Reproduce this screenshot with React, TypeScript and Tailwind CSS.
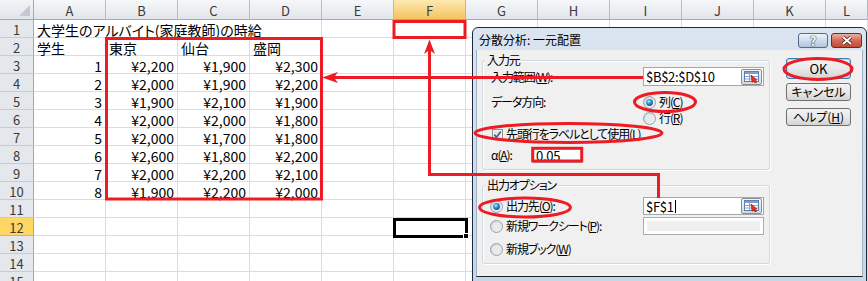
import React from "react";

const COLS = ["A", "B", "C", "D", "E", "F", "G", "H", "I", "J", "K", "L"];

const DATA: number[][] = [
  [1, 2200, 1900, 2300],
  [2, 2000, 1900, 2200],
  [3, 1900, 2100, 1900],
  [4, 2000, 2000, 1800],
  [5, 2000, 1700, 1800],
  [6, 2600, 1800, 2200],
  [7, 2000, 2200, 2100],
  [8, 1900, 2200, 2000],
];

const yen = (n: number) => "\u00A5" + n.toLocaleString("en-US");

const CELL =
  "border-r border-b border-[#dadcdf] text-[14px] leading-[14px] pt-[3px] px-[3px] whitespace-nowrap text-black";

function ColHeader({ label, sel }: { label: string; sel?: boolean }) {
  return (
    <div
      className={
        sel
          ? "flex items-center justify-center border-r border-b border-r-[#d9b36a] border-b-[#e49a37] bg-gradient-to-b from-[#fde9b0] to-[#f4c35c] text-[13px] leading-none pt-[1px] text-[#3a3a3a]"
          : "flex items-center justify-center border-r border-b border-r-[#b5bcc6] border-b-[#9eaab8] bg-gradient-to-b from-[#f6f8fa] to-[#e1e5ea] text-[13px] leading-none pt-[1px] text-[#3a3a3a]"
      }
    >
      {label}
    </div>
  );
}

function RowHeader({ n, sel }: { n: number; sel?: boolean }) {
  return (
    <div
      className={
        sel
          ? "flex items-center justify-center border-r border-b border-r-[#e49a37] border-b-[#d9b36a] bg-[#fdd663] text-[13px] leading-none pt-[2px] text-[#3a3a3a]"
          : "flex items-center justify-center border-r border-b border-r-[#9eaab8] border-b-[#c6ccd4] bg-[#e4e8ed] text-[13px] leading-none pt-[2px] text-[#3a3a3a]"
      }
    >
      {n}
    </div>
  );
}

function Sheet() {
  const cells: React.ReactNode[] = [];
  cells.push(
    <div
      key="corner"
      className="relative border-r border-b border-r-[#9eaab8] border-b-[#9eaab8] bg-gradient-to-b from-[#f2f4f7] to-[#e1e5ea]"
    >
      <svg className="absolute right-[3px] bottom-[3px]" width="11" height="11" viewBox="0 0 11 11">
        <polygon points="11,0 11,11 0,11" fill="#c3c9d1" />
      </svg>
    </div>
  );
  COLS.forEach((c) => cells.push(<ColHeader key={"h" + c} label={c} sel={c === "F"} />));

  for (let r = 1; r <= 15; r++) {
    cells.push(<RowHeader key={"r" + r} n={r} sel={r === 12} />);
    if (r === 1) {
      cells.push(
        <div key="a1" className={CELL + " col-span-4"}>
          大学生のアルバイト(家庭教師)の時給
        </div>
      );
      for (let c = 4; c < 12; c++) cells.push(<div key={"c1-" + c} className={CELL} />);
      continue;
    }
    for (let c = 0; c < 12; c++) {
      let content: React.ReactNode = null;
      let right = false;
      if (r === 2) {
        content = ["学生", "東京", "仙台", "盛岡"][c] ?? null;
      } else if (r >= 3 && r <= 10 && c < 4) {
        const v = DATA[r - 3][c];
        content = c === 0 ? String(v) : yen(v);
        right = true;
      }
      const active = r === 12 && c === 5;
      cells.push(
        <div
          key={"c" + r + "-" + c}
          className={CELL + (right ? " text-right" : "") + (active ? " relative" : "")}
        >
          {content}
          {active ? (
            <>
              <div className="absolute left-[-1px] top-0 w-[75px] h-[20px] border-[3px] border-black" />
              <div className="absolute left-[69px] top-[15px] w-[6px] h-[6px] bg-black border border-white" />
            </>
          ) : null}
        </div>
      );
    }
  }

  return (
    <div className="grid grid-cols-[34px_repeat(11,72px)_42px] grid-rows-[20px_repeat(15,18px)]">
      {cells}
    </div>
  );
}

function Radio({ checked }: { checked?: boolean }) {
  return (
    <svg width="13" height="13" viewBox="0 0 13 13" className="shrink-0">
      <defs>
        <linearGradient id="rgb" x1="0" y1="0" x2="1" y2="1">
          <stop offset="0" stopColor="#c9ccd1" />
          <stop offset="1" stopColor="#f7f7f7" />
        </linearGradient>
        <radialGradient id="rdot" cx="0.4" cy="0.35" r="0.75">
          <stop offset="0" stopColor="#b5ecff" />
          <stop offset="0.45" stopColor="#2b95dc" />
          <stop offset="1" stopColor="#0a3b73" />
        </radialGradient>
      </defs>
      <circle cx="6.5" cy="6.5" r="6" fill="url(#rgb)" stroke="#9aa0a7" />
      <circle cx="6.5" cy="6.5" r="4.2" fill="#e9eaec" />
      {checked ? <circle cx="6.5" cy="6.5" r="3.4" fill="url(#rdot)" /> : null}
    </svg>
  );
}

function Checkbox() {
  return (
    <svg width="11" height="11" viewBox="0 0 11 11" className="shrink-0">
      <rect x="0.5" y="0.5" width="10" height="10" fill="#f4f4f4" stroke="#8e8f8f" />
      <rect x="2" y="2" width="7" height="7" fill="#e3e5e8" />
      <path d="M2.3 5.6 L4.5 8.2 L8.8 2.4" fill="none" stroke="#4a5f8f" strokeWidth="1.7" />
    </svg>
  );
}

function RefIcon() {
  return (
    <svg width="16" height="12" viewBox="0 0 16 12">
      <rect x="0.5" y="0.5" width="14" height="10" fill="#ffffff" stroke="#5b7fb3" />
      <rect x="1" y="1" width="13" height="2" fill="#7f9fd0" />
      <line x1="1" y1="5.5" x2="14" y2="5.5" stroke="#8aa5cf" />
      <line x1="1" y1="8" x2="14" y2="8" stroke="#8aa5cf" />
      <line x1="5.5" y1="3" x2="5.5" y2="10" stroke="#8aa5cf" />
      <path d="M7 4 L13 9 L11 9.5 L12.5 12 L11 12 L9.8 10 L8 11.3 Z" fill="#e0301e" stroke="#9a1a10" strokeWidth="0.6" />
    </svg>
  );
}

function RefBox({ h, children }: { h: string; children: React.ReactNode }) {
  return (
    <div className={"flex items-center w-[121px] border border-[#a5a7ab] bg-white pl-[2px] pr-[1px] " + h}>
      <div className="flex-1 flex items-center text-[13px] leading-none tracking-[-0.3px]">{children}</div>
      <div className="w-[21px] h-[16px] flex items-center justify-center rounded-[2px] border border-[#8a8d92] bg-gradient-to-b from-[#f4f4f4] to-[#d8d8d8]">
        <RefIcon />
      </div>
    </div>
  );
}

function Group({ label, h, children }: { label: string; h: string; children: React.ReactNode }) {
  return (
    <div className={"relative w-[288px] rounded-[3px] border border-[#d0d7dd] shadow-[inset_1px_1px_0_#ffffff,1px_1px_0_#ffffff] " + h}>
      <span className="absolute left-[2px] top-[-9px] bg-[#f0f0f0] px-[2px] leading-[16px]">{label}</span>
      {children}
    </div>
  );
}

function Btn({ children, ok, extra }: { children: React.ReactNode; ok?: boolean; extra?: string }) {
  return (
    <div
      className={
        (ok
          ? "h-[21px] border-[#3c7fb1] shadow-[inset_0_0_0_1px_#8de3fb] text-[13px] "
          : "h-[18px] border-[#707070] ") +
        "w-[65px] flex items-center justify-center rounded-[3px] border bg-gradient-to-b from-[#f3f3f3] via-[#e9e9e9] to-[#d4d4d4] leading-none " +
        (extra ?? "")
      }
    >
      {children}
    </div>
  );
}

function Dialog() {
  return (
    <div className="absolute left-[472px] top-[27px] w-[395px] h-[262px] rounded-t-[6px] border border-[#1f2a38] bg-gradient-to-b from-[#dbe5f1] to-[#c3d6ea] text-[12px] text-black">
      <div className="h-[22px] flex items-start justify-between pl-[6px] pr-[4px]">
        <span className="mt-[5px] leading-[13px]">分散分析: 一元配置</span>
        <div className="flex gap-[3px] mt-[5px]">
          <div className="w-[30px] h-[15px] rounded-[3px] border border-[#55698a] bg-gradient-to-b from-[#eef3f9] to-[#b2c5dc] flex items-center justify-center">
            <span className="text-[13px] font-bold text-white leading-none [text-shadow:0_0_1px_#2b3a55,0_0_1px_#2b3a55,0_0_1px_#2b3a55]">?</span>
          </div>
          <div className="w-[31px] h-[15px] rounded-[3px] border border-[#6b2a22] bg-gradient-to-b from-[#eab0a3] via-[#d06c58] to-[#c04a36] flex items-center justify-center">
            <svg width="12" height="9" viewBox="0 0 12 9">
              <path d="M2 1 L10 8 M10 1 L2 8" stroke="#4a1a14" strokeWidth="3.4" />
              <path d="M2 1 L10 8 M10 1 L2 8" stroke="#ffffff" strokeWidth="2" />
            </svg>
          </div>
        </div>
      </div>
      <div className="mx-[3px] h-[227px] bg-[#f0f0f0] border-x border-b border-x-[#9fb0c4] border-b-[#222222] flex pl-[5px] pt-[8px] tracking-[-1.1px]">
        <div className="flex flex-col">
          <Group label="入力元" h="h-[110px] mt-[2px]">
            <div className="flex flex-col pl-[8px] pt-[6px]">
              <div className="flex items-center h-[19px]">
                <span className="w-[152px]">
                  入力範囲(<span className="underline">W</span>):
                </span>
                <RefBox h="h-[19px]">$B$2:$D$10</RefBox>
              </div>
              <div className="flex items-center h-[16px] mt-[8px]">
                <span className="w-[152px]">データ方向:</span>
                <Radio checked />
                <span className="ml-[3px]">
                  列(<span className="underline">C</span>)
                </span>
              </div>
              <div className="flex items-center h-[16px] pl-[152px]">
                <Radio />
                <span className="ml-[3px]">
                  行(<span className="underline">R</span>)
                </span>
              </div>
              <div className="flex items-center h-[16px] pl-[1px]">
                <Checkbox />
                <span className="ml-[3px]">
                  先頭行をラベルとして使用(<span className="underline">L</span>)
                </span>
              </div>
              <div className="flex items-center h-[16px] mt-[5px]">
                <span className="w-[42px]">
                  α(<span className="underline">A</span>):
                </span>
                <div className="w-[49px] h-[15px] border border-[#a5a7ab] bg-white pl-[2px] flex items-center text-[13px] leading-none tracking-[-0.3px]">
                  0.05
                </div>
              </div>
            </div>
          </Group>
          <Group label="出力オプション" h="h-[79px] mt-[15px]">
            <div className="flex flex-col pl-[7px] pt-[11px]">
              <div className="flex items-center h-[18px]">
                <div className="w-[153px] flex items-center">
                  <Radio checked />
                  <span className="ml-[3px]">
                    出力先(<span className="underline">O</span>):
                  </span>
                </div>
                <RefBox h="h-[18px]">
                  $F$1<span className="inline-block w-[1px] h-[13px] bg-black ml-[1px]" />
                </RefBox>
              </div>
              <div className="flex items-center h-[18px] mt-[2px]">
                <div className="w-[153px] flex items-center">
                  <Radio />
                  <span className="ml-[3px]">
                    新規ワークシート(<span className="underline">P</span>):
                  </span>
                </div>
                <div className="w-[121px] h-[18px] border border-[#adadad] bg-[#efefef] shadow-[inset_0_0_0_3px_#ffffff]" />
              </div>
              <div className="flex items-center h-[18px] mt-[5px]">
                <Radio />
                <span className="ml-[3px]">
                  新規ブック(<span className="underline">W</span>)
                </span>
              </div>
            </div>
          </Group>
        </div>
        <div className="flex flex-col ml-[16px] tracking-normal">
          <Btn ok>OK</Btn>
          <Btn extra="mt-[4px]">キャンセル</Btn>
          <Btn extra="mt-[7px]">
            ヘルプ(<span className="underline">H</span>)
          </Btn>
        </div>
      </div>
    </div>
  );
}

function Annotations() {
  return (
    <svg className="absolute left-0 top-0 pointer-events-none" width="868" height="281" viewBox="0 0 868 281">
      <g fill="none" stroke="#ed1c24" strokeWidth="3">
        <rect x="106.5" y="38.5" width="215" height="160.5" />
        <rect x="394" y="21.5" width="71" height="16" />
        <rect x="532.7" y="148.3" width="49" height="12.7" />
        <line x1="334" y1="77.5" x2="643" y2="77.5" />
        <polyline points="429.5,50 429.5,174.5 658.5,174.5 658.5,198" />
        <ellipse cx="818" cy="69" rx="34" ry="10.5" />
        <ellipse cx="665" cy="102" rx="30.5" ry="9.5" />
        <ellipse cx="568.5" cy="133" rx="93.5" ry="9.5" />
        <ellipse cx="525" cy="207.5" rx="45.5" ry="9.5" />
      </g>
      <polygon fill="#ed1c24" points="322,77.5 338,72 334,77.5 338,83" />
      <polygon fill="#ed1c24" points="429.5,39.5 435,54 429.5,50 424,54" />
    </svg>
  );
}

export default function App() {
  return (
    <div className="relative w-[868px] h-[281px] overflow-hidden bg-white font-['Noto_Sans_CJK_JP',sans-serif] [font-feature-settings:'palt']">
      <Sheet />
      <Dialog />
      <Annotations />
    </div>
  );
}
